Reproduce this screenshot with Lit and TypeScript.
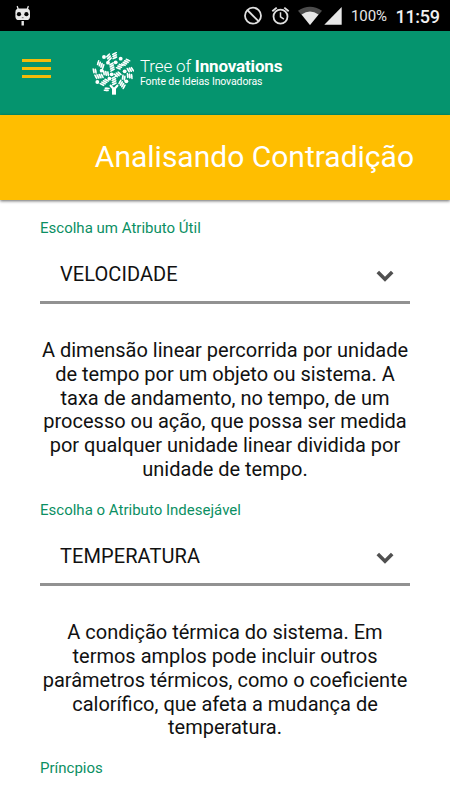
import { LitElement, html, svg, css } from "lit";
import { customElement, property } from "lit/decorators.js";

// Striped leaves of the logo: x, y, rotation, number of stripes
const LEAVES: [number, number, number, number][] = [
  [344, 75, 85, 3], [327, 80, 65, 3], [377, 95, -45, 4], [391, 117, -12, 3],
  [389, 136, 14, 3], [302, 102, 38, 4], [284, 121, 8, 2], [297, 137, -8, 4],
  [313, 155, -42, 4], [366, 161, 50, 4], [342, 150, 84, 4], [353, 131, -28, 3],
  [359, 108, -50, 3], [318, 128, 12, 3], [336, 109, 80, 4], [320, 176, -65, 2],
  [371, 141, 28, 2],
];
const DOTS = [[312, 79], [324, 96], [347, 95], [362, 84], [374, 122], [292, 154], [379, 152], [305, 120], [335, 131], [328, 144]];

@customElement("status-bar")
export class StatusBar extends LitElement {
  static styles = css`
    :host { display: flex; height: 31px; background: #000; color: #e6e6e6; box-sizing: border-box; font-family: Roboto, sans-serif; }
    svg { display: block; flex: none; }
    .robot { margin: 5px 0 0 15px; }
    .tray { margin-left: auto; display: flex; width: 206px; }
    .icons { flex: none; }
    .battery { font-size: 15px; line-height: 33px; margin-left: 8px; width: 37px; white-space: nowrap; letter-spacing: -.1px; }
    .clock { font-size: 18px; line-height: 33px; font-weight: 500; margin-left: 7.500px; white-space: nowrap; color: #f0f0f0; letter-spacing: -.3px; }
  `;
  render() {
    return html`
      <svg class="robot" width="16" height="22" viewBox="0 0 16 22">
        <path d="M2.300 1.500 3.300 4.500M13.200 1.500 12.200 4.500" stroke="#e8e8e8" stroke-width="1.300" stroke-linecap="round"/>
        <rect x=".4" y="3.600" width="14.600" height="11.400" rx="3.600" fill="#e8e8e8"/>
        <circle cx="4" cy="9.200" r="2.100" fill="#050505"/><circle cx="11.400" cy="9.200" r="2.100" fill="#050505"/>
        <path d="M6.800 12.700h1.800" stroke="#777" stroke-width="1"/>
        <path d="M7.700 16v4.500" stroke="#e8e8e8" stroke-width="2.400"/>
      </svg>
      <div class="tray">
        <svg class="icons" width="99" height="31" viewBox="244 0 99 31">
          <g fill="none" stroke="#e0e0e0" stroke-width="1.800">
            <circle cx="253" cy="15.700" r="8"/><path d="M247.300 10 258.700 21.400"/>
            <circle cx="280.500" cy="16.600" r="7"/><path d="M280.500 12.300v4.600l3.400 2.200" stroke-width="1.500"/>
            <path d="M272.300 11.300 276.700 7.600M288.700 11.300 284.300 7.600"/>
          </g>
          <path d="M298 10.800Q310 2.800 322 10.800L310 25Z" fill="#4c4c4c"/>
          <path d="M301.600 14.600Q310 8.600 318.500 14.600L310 25Z" fill="#e8e8e8"/>
          <path d="M341.700 7V24.800H324.300Z" fill="#e8e8e8"/>
        </svg>
        <span class="battery">100%</span>
        <span class="clock">11:59</span>
      </div>`;
  }
}

@customElement("app-header")
export class AppHeader extends LitElement {
  static styles = css`
    :host { display: flex; height: 84px; background: #05946e; color: #fff; box-sizing: border-box; font-family: Roboto, sans-serif; }
    .menu { width: 29px; height: 19px; margin: 28px 0 0 22px; display: flex; flex-direction: column; justify-content: space-between; }
    .menu span { height: 3px; background: #f5bb08; }
    .logo { display: block; margin: 21px 0 0 41px; }
    .brand { margin: 25px 0 0 6px; white-space: nowrap; }
    .name { font-size: 17px; line-height: 20px; height: 20px; font-weight: 300; letter-spacing: -.16px; }
    .name b { font-weight: 700; }
    .tag { font-size: 10.500px; line-height: 12px; letter-spacing: -.12px; }
  `;
  render() {
    return html`
      <div class="menu"><span></span><span></span><span></span></div>
      <svg class="logo" width="42" height="43" viewBox="276 64 126 129">
        <g stroke="#fff" stroke-width="4.400" stroke-linecap="round">
          ${LEAVES.map(([x, y, a, n]) => svg`<g transform="translate(${x} ${y}) rotate(${a})">
            <ellipse rx=${n * 3} ry="5.500" fill="#fff" fill-opacity=".45" stroke="none"/>
            ${Array.from({ length: n }, (_, i) => {
              const p = (i - (n - 1) / 2) * 6.5;
              return svg`<path d="M${p - 2} -5.500L${p + 2} 5.500"/>`;
            })}
          </g>`)}
        </g>
        ${DOTS.map(([x, y]) => svg`<circle cx=${x} cy=${y} r="5.800" fill="#fff"/>`)}
        <path d="M332 165 342 176 352 165" fill="none" stroke="#fff" stroke-width="6.500" stroke-linecap="round"/>
        <path d="M336 173H348V192H336Z" fill="#fff"/>
      </svg>
      <div class="brand">
        <div class="name">Tree of <b>Innovations</b></div>
        <div class="tag">Fonte de Ideias Inovadoras</div>
      </div>`;
  }
}

@customElement("attribute-select")
export class AttributeSelect extends LitElement {
  @property() label = "";
  @property() value = "";
  @property({ attribute: false }) lines: string[] = [];
  static styles = css`
    :host { display: block; color: #111; font-family: Roboto, sans-serif; }
    .label { font-size: 15px; line-height: 18px; color: #0b8f63; letter-spacing: .01px; }
    .field { display: flex; justify-content: space-between; height: 64px; box-sizing: border-box; border-bottom: 3px solid #929292; margin: 3px 0 35px; padding: 0 16px 0 20px; }
    .value { font-size: 20px; line-height: 24px; margin-top: 22px; letter-spacing: .08px; }
    svg { display: block; margin-top: 30px; }
    .line { font-size: 20px; line-height: 23.800px; text-align: center; white-space: nowrap; }
  `;
  render() {
    return html`
      <div class="label">${this.label}</div>
      <div class="field">
        <span class="value">${this.value}</span>
        <svg width="18" height="13" viewBox="0 0 18 13"><path d="M1.800 2 9 9.200 16.200 2" fill="none" stroke="#505050" stroke-width="3.600"/></svg>
      </div>
      ${this.lines.map((l) => html`<div class="line">${l}</div>`)}`;
  }
}

@customElement("app-root")
export class AppRoot extends LitElement {
  static styles = css`
    :host { display: block; height: 800px; overflow: hidden; background: #fff; font-family: Roboto, sans-serif; }
    .title { height: 85px; box-sizing: border-box; padding: 0 36px 0 0; background: #ffbe00; color: #fff; text-align: right; font-size: 30px; line-height: 84px; white-space: nowrap; box-shadow: 0 1px 3px rgba(0,0,0,.6); }
    main { padding: 19px 40px 0; }
    .second { margin-top: 19.500px; }
    .next { margin-top: 19px; font-size: 15px; line-height: 18px; color: #0b8f63; }
  `;
  render() {
    return html`
      <status-bar></status-bar>
      <app-header></app-header>
      <div class="title">Analisando Contradição</div>
      <main>
        <attribute-select label="Escolha um Atributo Útil" value="VELOCIDADE" .lines=${[
          "A dimensão linear percorrida por unidade",
          "de tempo por um objeto ou sistema. A",
          "taxa de andamento, no tempo, de um",
          "processo ou ação, que possa ser medida",
          "por qualquer unidade linear dividida por",
          "unidade de tempo.",
        ]}></attribute-select>
        <attribute-select class="second" label="Escolha o Atributo Indesejável" value="TEMPERATURA" .lines=${[
          "A condição térmica do sistema. Em",
          "termos amplos pode incluir outros",
          "parâmetros térmicos, como o coeficiente",
          "calorífico, que afeta a mudança de",
          "temperatura.",
        ]}></attribute-select>
        <div class="next">Príncpios</div>
      </main>`;
  }
}
